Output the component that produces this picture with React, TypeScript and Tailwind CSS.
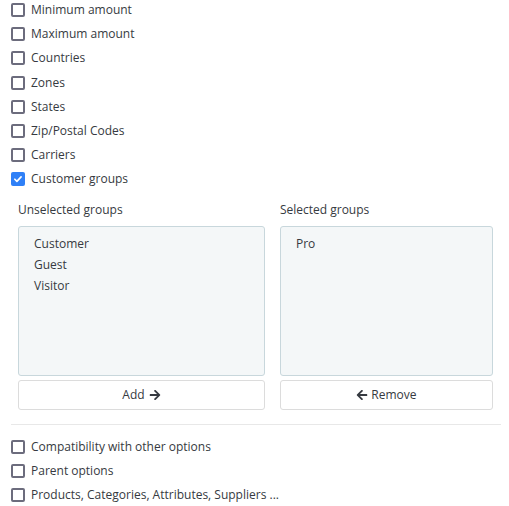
import { useState } from "react";

// Cart-rule style "conditions" panel: a checkbox list, with a dual listbox for
// customer groups shown under the checked row.
const TOP = [
  "Minimum amount",
  "Maximum amount",
  "Countries",
  "Zones",
  "States",
  "Zip/Postal Codes",
  "Carriers",
  "Customer groups",
];
const BOTTOM = [
  "Compatibility with other options",
  "Parent options",
  "Products, Categories, Attributes, Suppliers ...",
];

function ArrowRight() {
  return (
    <svg className="h-[12px] w-[12px]" viewBox="0 0 448 512" fill="currentColor">
      <path d="M190.5 66.9l22.2-22.2c9.4-9.4 24.6-9.4 33.9 0L441 239c9.4 9.4 9.4 24.6 0 33.9L246.6 467.3c-9.4 9.4-24.6 9.4-33.9 0l-22.2-22.2c-9.5-9.5-9.3-25 .4-34.3L311.4 296H24c-13.3 0-24-10.7-24-24v-32c0-13.3 10.7-24 24-24h287.4L190.9 101.2c-9.8-9.3-10-24.8-.4-34.3z" />
    </svg>
  );
}

function ArrowLeft() {
  return (
    <svg className="h-[12px] w-[12px]" viewBox="0 0 448 512" fill="currentColor">
      <path d="M257.5 445.1l-22.2 22.2c-9.4 9.4-24.6 9.4-33.9 0L7 273c-9.4-9.4-9.4-24.6 0-33.9L201.4 44.7c9.4-9.4 24.6-9.4 33.9 0l22.2 22.2c9.5 9.5 9.3 25-.4 34.3L136.6 216H424c13.3 0 24 10.7 24 24v32c0 13.3-10.7 24-24 24H136.6l120.5 114.8c9.8 9.3 10 24.8.4 34.3z" />
    </svg>
  );
}

function Check({ label, checked, onToggle }: { label: string; checked: boolean; onToggle: () => void }) {
  return (
    <label className="flex h-[24.2px] cursor-pointer items-center gap-[6px]">
      <span
        onClick={onToggle}
        className={`flex h-[14px] w-[14px] shrink-0 items-center justify-center rounded-[2px] ${
          checked ? "bg-[#2f80f7]" : "border-2 border-[#6c6c7d] bg-white"
        }`}
      >
        {checked && (
          <svg className="h-[10px] w-[10px]" viewBox="0 0 12 12" fill="none" stroke="white" strokeWidth="2" strokeLinecap="round" strokeLinejoin="round">
            <path d="M2.2 6.3l2.5 2.5 5-5.4" />
          </svg>
        )}
      </span>
      <span>{label}</span>
    </label>
  );
}

function ListBox({ items }: { items: string[] }) {
  return (
    <div className="h-[150px] rounded-[3px] border border-[#c8d7dc] bg-[#f4f7f8] px-[15px] py-[6px] leading-[21px]">
      {items.map((i) => (
        <div key={i}>{i}</div>
      ))}
    </div>
  );
}

export default function App() {
  const [checked, setChecked] = useState<Record<string, boolean>>({ "Customer groups": true });
  const toggle = (k: string) => setChecked((c) => ({ ...c, [k]: !c[k] }));

  return (
    <div className="h-[506px] w-[509px] overflow-hidden bg-white pl-[11px] text-[12px] text-[#363a41] [font-family:'Open_Sans',sans-serif]">
      <div className="-mt-[2px] flex flex-col">
        {TOP.map((l) => (
          <Check key={l} label={l} checked={!!checked[l]} onToggle={() => toggle(l)} />
        ))}
      </div>

      <div className="ml-[7px] mt-[8px] flex w-[475px] gap-[15px]">
        <div className="flex w-[248px] flex-col">
          <div className="h-[26px] pt-[1px]">Unselected groups</div>
          <ListBox items={["Customer", "Guest", "Visitor"]} />
          <button className="mt-[4px] flex h-[30px] items-center justify-center gap-[4px] rounded-[3px] border border-[#dcdcdc] bg-white">
            Add <ArrowRight />
          </button>
        </div>
        <div className="flex w-[214px] flex-col">
          <div className="h-[26px] pt-[1px]">Selected groups</div>
          <ListBox items={["Pro"]} />
          <button className="mt-[4px] flex h-[30px] items-center justify-center gap-[3px] rounded-[3px] border border-[#dcdcdc] bg-white">
            <ArrowLeft /> Remove
          </button>
        </div>
      </div>

      <div className="mt-[14px] mb-[10px] w-[490px] border-t border-[#e8e8e8]" />

      <div className="flex flex-col">
        {BOTTOM.map((l) => (
          <Check key={l} label={l} checked={!!checked[l]} onToggle={() => toggle(l)} />
        ))}
      </div>
    </div>
  );
}
